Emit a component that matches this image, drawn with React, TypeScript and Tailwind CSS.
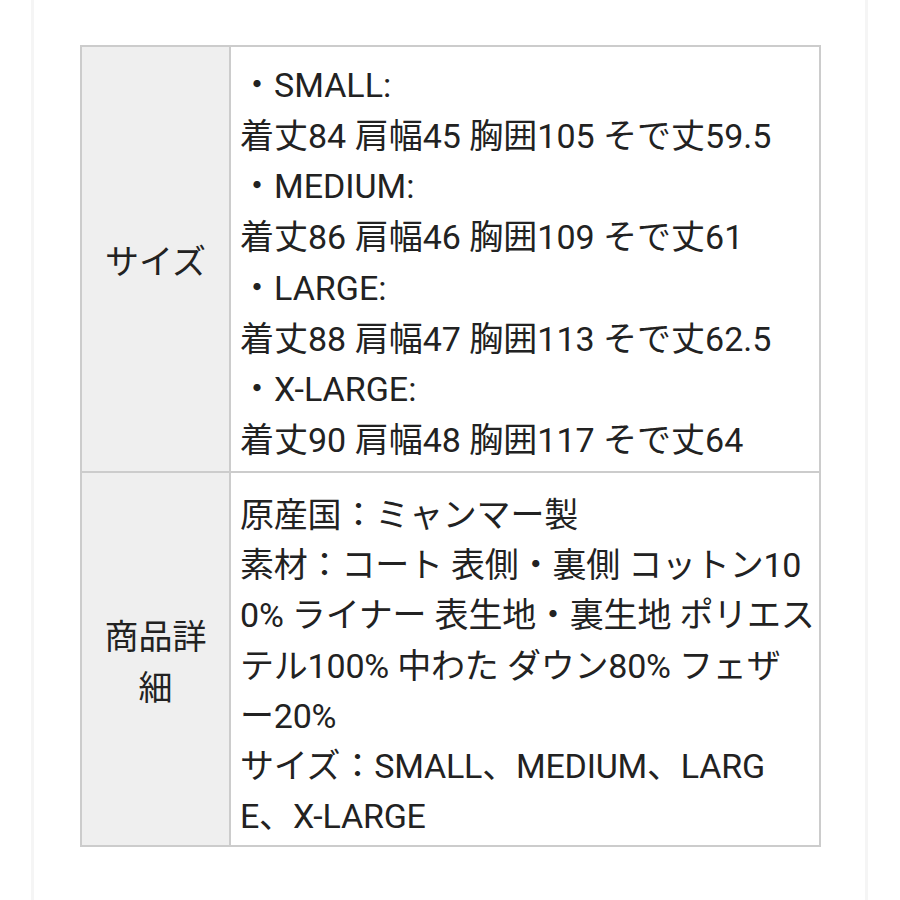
import React from 'react';

const sizeLines = [
  '・SMALL:',
  '着丈84 肩幅45 胸囲105 そで丈59.5',
  '・MEDIUM:',
  '着丈86 肩幅46 胸囲109 そで丈61',
  '・LARGE:',
  '着丈88 肩幅47 胸囲113 そで丈62.5',
  '・X-LARGE:',
  '着丈90 肩幅48 胸囲117 そで丈64',
];

const detailLines = [
  '原産国：ミャンマー製',
  '素材：コート 表側・裏側 コットン10',
  '0% ライナー 表生地・裏生地 ポリエス',
  'テル100% 中わた ダウン80% フェザ',
  'ー20%',
  'サイズ：SMALL、MEDIUM、LARG',
  'E、X-LARGE',
];

const Lines = ({ lines }: { lines: string[] }) => (
  <>
    {lines.map((l, i) => (
      <div key={i} className="whitespace-nowrap">
        {l}
      </div>
    ))}
  </>
);

const App = () => {
  return (
    <div
      className="w-[900px] h-[900px] bg-white text-[#222222]"
      style={{ fontFamily: 'Roboto, "Noto Sans CJK JP", sans-serif' }}
    >
      <div className="ml-[31px] w-[837px] h-full border-x-[3px] border-[#f5f5f5] pt-[45px] pl-[46px]">
        <table className="w-[741px] border-collapse text-[34px] leading-[50.7px]">
          <tbody>
            <tr>
              <th className="w-[149px] bg-[#efefef] border-2 border-[#cccccc] font-normal text-center align-middle pt-[8px]">
                サイズ
              </th>
              <td className="border-2 border-[#cccccc] pl-[9px] pt-[13px] pb-[5px] align-top">
                <Lines lines={sizeLines} />
              </td>
            </tr>
            <tr>
              <th className="w-[149px] bg-[#efefef] border-2 border-[#cccccc] font-normal text-center align-middle pt-[8px]">
                商品詳
                <br />
                細
              </th>
              <td className="border-2 border-[#cccccc] pl-[9px] pt-[17px] pb-[3px] align-top leading-[50.3px] tracking-[-0.2px]">
                <Lines lines={detailLines} />
              </td>
            </tr>
          </tbody>
        </table>
      </div>
    </div>
  );
};

export default App;
